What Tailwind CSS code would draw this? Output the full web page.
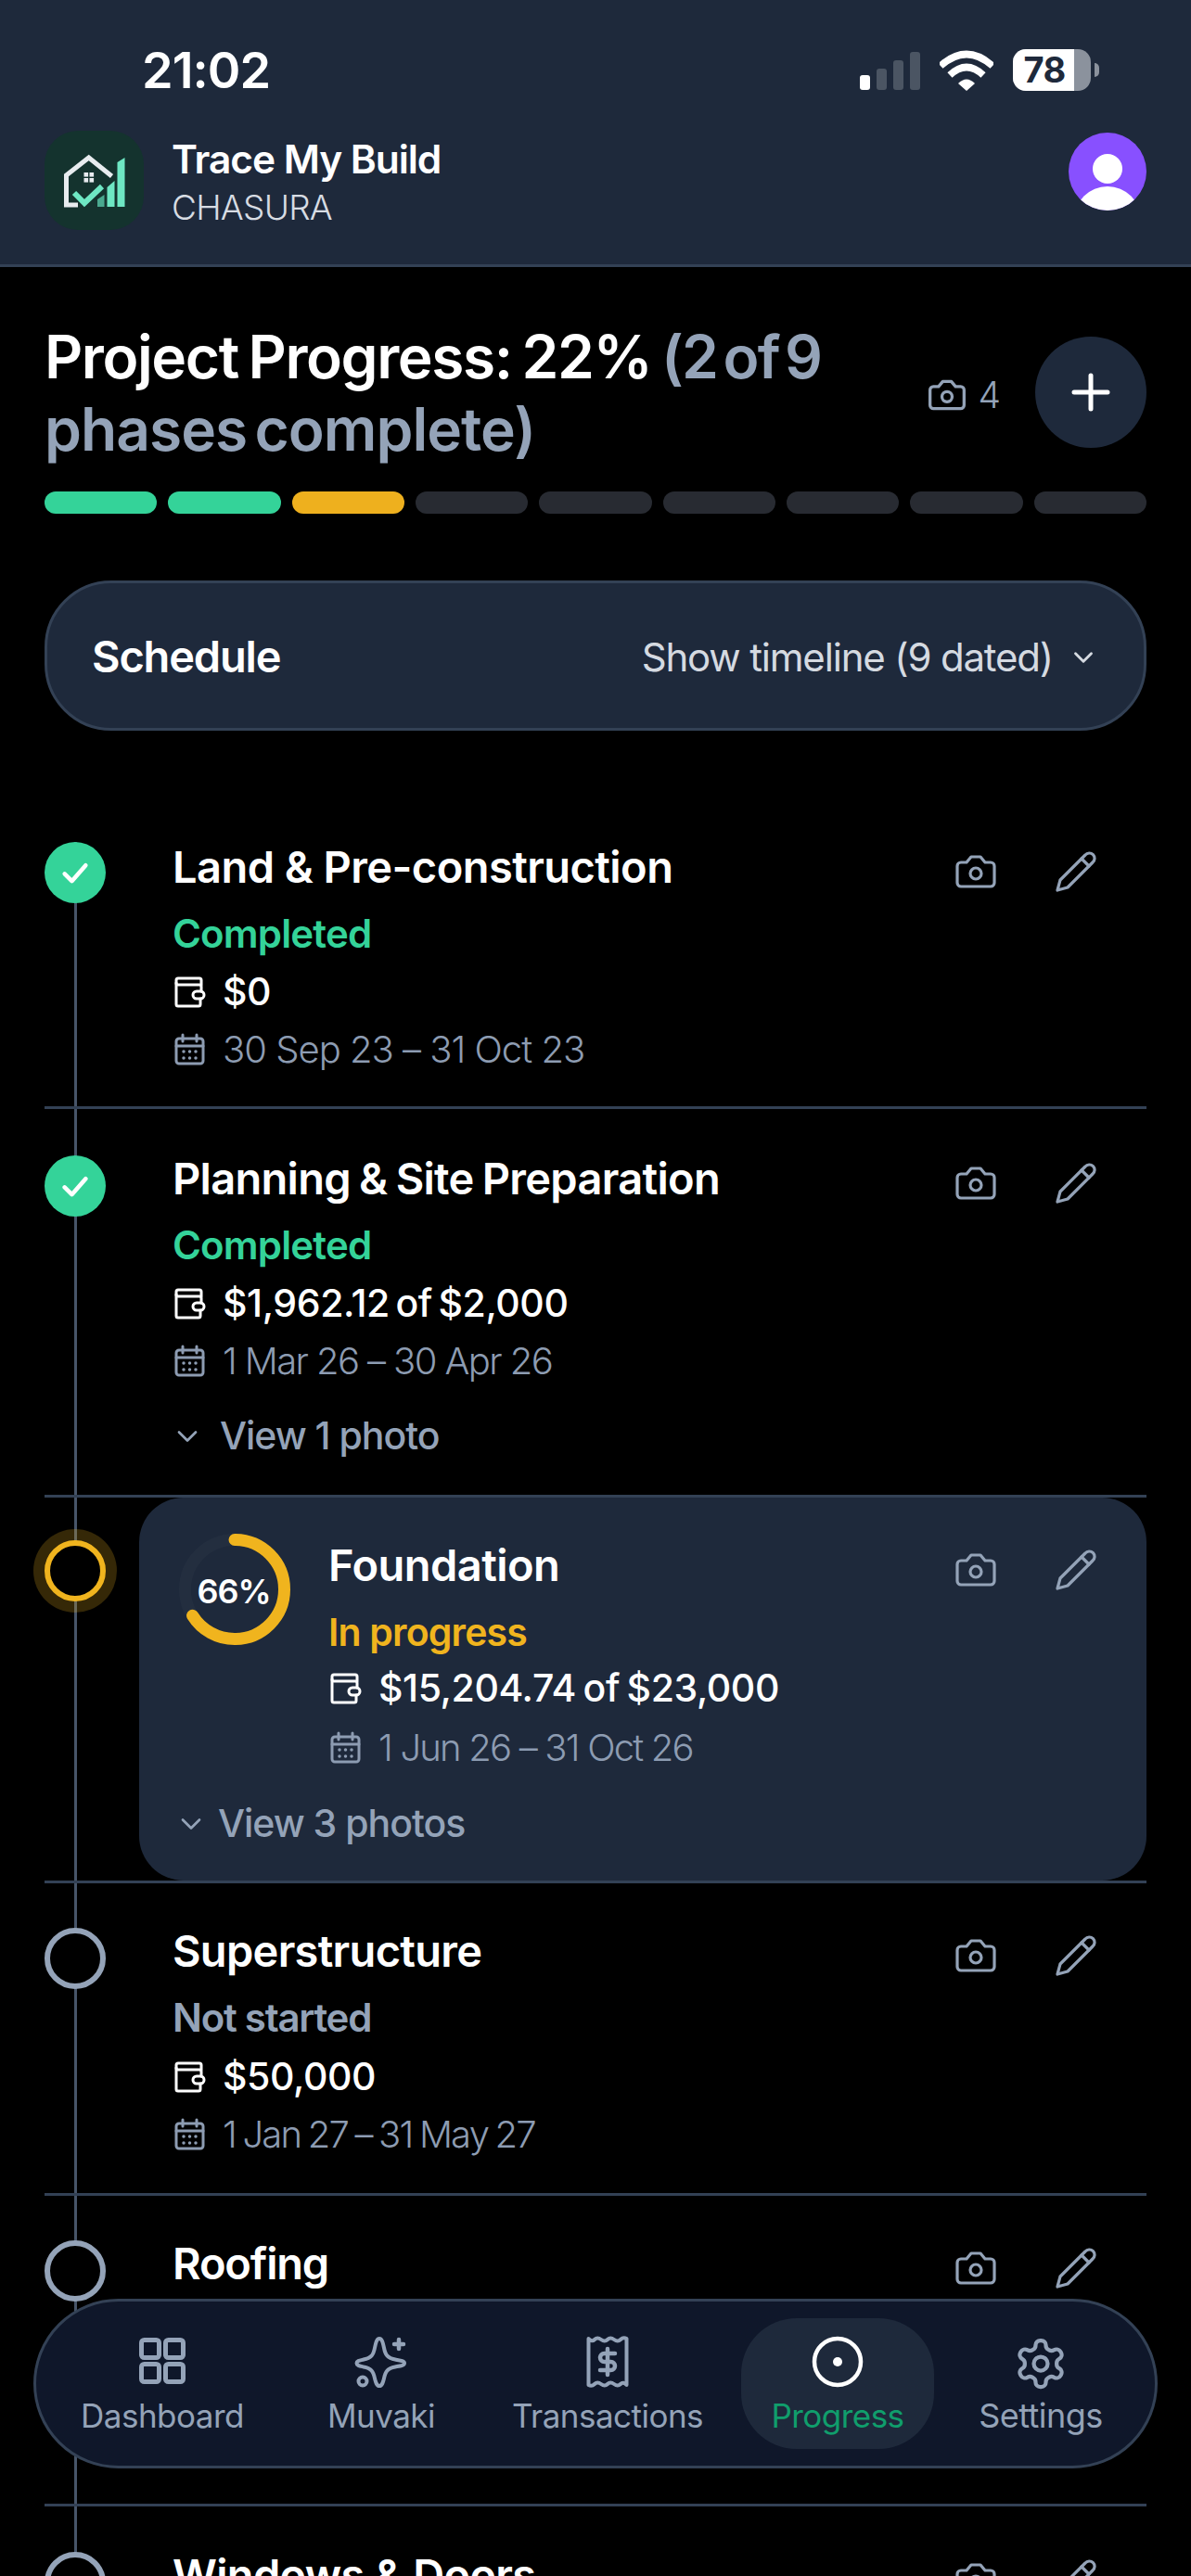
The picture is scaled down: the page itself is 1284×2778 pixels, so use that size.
<!doctype html>
<html><head><meta charset="utf-8"><script src="https://cdn.jsdelivr.net/npm/@tailwindcss/browser@4"></script></head>
<body class="bg-black">
<div class="relative w-[1284px] h-[2778px] overflow-hidden bg-black text-white font-['Inter',sans-serif]">
  <!-- Header -->
  <header class="h-[288px] bg-[#1e293b] border-b-[3px] border-[#334155] px-[48px] pt-[45px]">
    <div class="h-[60px] flex items-center justify-between">
      <div class="ml-[105px] mt-[2px] text-[54px] leading-[60px] font-semibold tracking-[-0.018em]">21:02</div>
      <div class="flex items-end gap-[21px] mr-[51px] h-[46px]">
        <div class="flex items-end gap-[7px] h-[41px] mb-[1px]">
          <div class="w-[11px] h-[16px] rounded-[3px] bg-white"></div>
          <div class="w-[11px] h-[23px] rounded-[3px] bg-[#4b5563]"></div>
          <div class="w-[11px] h-[32px] rounded-[3px] bg-[#4b5563]"></div>
          <div class="w-[11px] h-[41px] rounded-[3px] bg-[#4b5563]"></div>
        </div>
        <svg class="w-[58px] h-[44px]" viewBox="0 0 58 44"><path d="M1 17 Q29 -8 57 17" fill="none" stroke="#fff" stroke-width="7.5"/><path d="M11 27 Q29 10 47 27" fill="none" stroke="#fff" stroke-width="7.5"/><path d="M20 36 Q29 27 38 36 L29 44 Z" fill="#fff"/></svg>
        <div class="flex items-center gap-[4px]">
          <div class="relative w-[84px] h-[45px] rounded-[14px] bg-[#8b929d] overflow-hidden">
            <div class="w-[66px] h-[45px] bg-white text-[#1e293b] text-[38px] leading-[45px] font-bold text-center pl-[2px] tracking-[-0.02em]">78</div>
          </div>
          <div class="w-[5px] h-[15px] rounded-r-[5px] bg-[#8b929d]"></div>
        </div>
      </div>
    </div>
    <div class="mt-[36px] flex items-center justify-between">
      <div class="flex items-center gap-[30px]">
        <div class="w-[107px] h-[107px] rounded-[36px] bg-[#14332e]">
          <svg class="w-[107px] h-[107px]" viewBox="0 0 107 107">
            <path d="M36 80 H23.5 V48 L47.7 29 L72.5 49" fill="none" stroke="#e8ecef" stroke-width="5"/>
            <rect x="42.5" y="45" width="4.6" height="4.6" fill="#e8ecef"/><rect x="48.5" y="45" width="4.6" height="4.6" fill="#e8ecef"/><rect x="42.5" y="51" width="4.6" height="4.6" fill="#e8ecef"/><rect x="48.5" y="51" width="4.6" height="4.6" fill="#e8ecef"/>
            <path d="M32 67 L43 78 L62 60" fill="none" stroke="#6ee7c3" stroke-width="6"/>
            <path d="M57 74 L64.500 69 V82 H57 Z" fill="#4aa98f"/>
            <path d="M67.500 61 L75.500 54 V82 H67.500 Z" fill="#6ee7c3"/>
            <path d="M78.500 34 L86.500 29 V82 H78.500 Z" fill="#6ee7c3"/>
          </svg>
        </div>
        <div class="mt-[3px]">
          <div class="text-[42.5px] leading-[54px] font-semibold tracking-[-0.025em]">Trace My Build</div>
          <div class="text-[37px] leading-[46px] font-light text-[#d7dce3] tracking-[-0.02em] mt-[2px]">CHASURA</div>
        </div>
      </div>
      <div class="relative -mt-[19px] w-[84px] h-[84px] rounded-full bg-[#8850ff] overflow-hidden">
        <svg class="w-[84px] h-[84px]" viewBox="0 0 84 84"><circle cx="42" cy="39" r="16" fill="#fff"/><circle cx="42" cy="94" r="36" fill="#fff"/></svg>
      </div>
    </div>
  </header>

  <main class="px-[48px]">
    <!-- Project progress -->
    <div class="pt-[58px] flex items-center justify-between">
      <h1 class="w-[930px] text-[64px] leading-[78px] font-semibold tracking-[-0.022em] [word-spacing:-4px]">Project Progress: 22% <span class="text-[#94a3b8] tracking-[-0.028em] [word-spacing:-8px]">(2 of 9</span> <span class="text-[#94a3b8] tracking-[-0.015em] [word-spacing:-7px]">phases complete)</span></h1>
      <div class="flex items-center gap-[37px] -mt-[2px]">
        <div class="flex items-center gap-[11px] text-[#94a3b8] text-[39px] font-light mt-[6px]">
          <svg class="w-[44px] h-[44px]" viewBox="0 0 24 24" fill="none" stroke="currentColor" stroke-width="1.800" stroke-linecap="round" stroke-linejoin="round"><path d="M14.500 4h-5L7 7H4a2 2 0 0 0-2 2v9a2 2 0 0 0 2 2h16a2 2 0 0 0 2-2V9a2 2 0 0 0-2-2h-3l-2.500-3z"/><circle cx="12" cy="13" r="3"/></svg>
          <span>4</span>
        </div>
        <button class="w-[120px] h-[120px] rounded-full bg-[#1e293b] flex items-center justify-center">
          <svg class="w-[48px] h-[48px]" viewBox="0 0 48 48" stroke="#fff" stroke-width="5" stroke-linecap="round"><path d="M24 6 V42 M6 24 H42"/></svg>
        </button>
      </div>
    </div>
    <div class="mt-[28px] grid grid-cols-9 gap-[12px]">
      <div class="h-[24px] rounded-full bg-[#34d399]"></div>
      <div class="h-[24px] rounded-full bg-[#34d399]"></div>
      <div class="h-[24px] rounded-full bg-[#eeb01e]"></div>
      <div class="h-[24px] rounded-full bg-[#282b32]"></div>
      <div class="h-[24px] rounded-full bg-[#282b32]"></div>
      <div class="h-[24px] rounded-full bg-[#282b32]"></div>
      <div class="h-[24px] rounded-full bg-[#282b32]"></div>
      <div class="h-[24px] rounded-full bg-[#282b32]"></div>
      <div class="h-[24px] rounded-full bg-[#282b32]"></div>
    </div>

    <!-- Schedule -->
    <div class="mt-[72px] h-[162px] rounded-[72px] bg-[#1e293b] border-[3px] border-[#334155] px-[48px] flex items-center justify-between">
      <div class="mt-[3px] text-[47px] font-semibold tracking-[-0.025em]">Schedule</div>
      <div class="mt-[3px] flex items-center gap-[16px] text-[#d5dae1] text-[42px] tracking-[-0.028em]">
        <span>Show timeline (9 dated)</span>
        <svg class="w-[34px] h-[34px]" viewBox="0 0 24 24" fill="none" stroke="currentColor" stroke-width="2" stroke-linecap="round" stroke-linejoin="round"><path d="m6 9 6 6 6-6"/></svg>
      </div>
    </div>

    <!-- Timeline -->
    <div class="relative mt-[70px]">
      <div class="absolute left-[32px] top-[50px] bottom-0 w-[3px] bg-[#475569]"></div>

      <!-- Row 1 -->
      <section class="relative flex border-b-[3px] border-[#334155] h-[338px]">
        <div class="w-[138px] shrink-0 pt-[50px]">
          <div class="w-[66px] h-[66px] rounded-full bg-[#34d399] flex items-center justify-center">
            <svg class="w-[34px] h-[34px]" viewBox="0 0 24 24" fill="none" stroke="#fff" stroke-width="3.200" stroke-linecap="round" stroke-linejoin="round"><path d="M4 13 L9.500 18.500 L20 6.500"/></svg>
          </div>
        </div>
        <div class="flex-1 pt-[47px]">
          <div class="text-[47px] leading-[60px] font-semibold tracking-[-0.012em]">Land &amp; Pre-construction</div>
          <div class="mt-[12px] text-[42px] leading-[60px] font-semibold tracking-[-0.02em] text-[#34d399]">Completed</div>
          <div class="mt-[2px] flex items-center h-[62px]">
            <svg class="w-[36px] h-[36px] ml-[1px] mr-[17px]" viewBox="0 0 36 36" fill="none" stroke="#fff" stroke-width="3" stroke-linejoin="round" stroke-linecap="round"><path d="M30 10 V5 a2 2 0 0 0 -2 -2 H5 a2 2 0 0 0 -2 2 V31 a2 2 0 0 0 2 2 H27 a2 2 0 0 0 2 -2 V25"/><path d="M3 8 a2 2 0 0 0 2 2 H28 a2 2 0 0 1 2 2 V17"/><rect x="21" y="17" width="12" height="8" rx="4"/></svg>
            <span class="text-[41px] font-medium tracking-[-0.01em]">$0</span>
          </div>
          <div class="flex items-center h-[62px] text-[#8d9cb2]">
            <svg class="w-[36px] h-[36px] ml-[1px] mr-[17px]" viewBox="0 0 36 36" fill="none" stroke="currentColor" stroke-width="3" stroke-linecap="round"><rect x="3" y="6" width="29" height="27" rx="3"/><path d="M10 2 V9 M25 2 V9 M3 14 H32"/><path d="M11 20 h.01 M17.500 20 h.01 M24 20 h.01 M11 27 h.01 M17.500 27 h.01 M24 27 h.01" stroke-width="3.500"/></svg>
            <span class="text-[40px] font-light tracking-[-0.025em]">30 Sep 23 – 31 Oct 23</span>
          </div>
        </div>
        <div class="flex gap-[60px] pr-[52px] pt-[58px] text-[#94a3b8]">
          <svg class="w-[48px] h-[48px]" viewBox="0 0 24 24" fill="none" stroke="currentColor" stroke-width="1.600" stroke-linecap="round" stroke-linejoin="round"><path d="M14.500 4h-5L7 7H4a2 2 0 0 0-2 2v9a2 2 0 0 0 2 2h16a2 2 0 0 0 2-2V9a2 2 0 0 0-2-2h-3l-2.500-3z"/><circle cx="12" cy="13" r="3"/></svg>
          <svg class="w-[48px] h-[48px]" viewBox="0 0 24 24" fill="none" stroke="currentColor" stroke-width="1.600" stroke-linecap="round" stroke-linejoin="round"><path d="M17 3a2.850 2.830 0 1 1 4 4L7.500 20.500 2 22l1.500-5.500Z"/><path d="m15 5 4 4"/></svg>
        </div>
      </section>

      <!-- Row 2 -->
      <section class="relative flex border-b-[3px] border-[#334155] h-[419px]">
        <div class="w-[138px] shrink-0 pt-[50px]">
          <div class="w-[66px] h-[66px] rounded-full bg-[#34d399] flex items-center justify-center">
            <svg class="w-[34px] h-[34px]" viewBox="0 0 24 24" fill="none" stroke="#fff" stroke-width="3.200" stroke-linecap="round" stroke-linejoin="round"><path d="M4 13 L9.500 18.500 L20 6.500"/></svg>
          </div>
        </div>
        <div class="flex-1 pt-[45px]">
          <div class="text-[47px] leading-[60px] font-semibold tracking-[-0.015em] [word-spacing:-2px]">Planning &amp; Site Preparation</div>
          <div class="mt-[12px] text-[42px] leading-[60px] font-semibold tracking-[-0.02em] text-[#34d399]">Completed</div>
          <div class="mt-[2px] flex items-center h-[62px]">
            <svg class="w-[36px] h-[36px] ml-[1px] mr-[17px]" viewBox="0 0 36 36" fill="none" stroke="#fff" stroke-width="3" stroke-linejoin="round" stroke-linecap="round"><path d="M30 10 V5 a2 2 0 0 0 -2 -2 H5 a2 2 0 0 0 -2 2 V31 a2 2 0 0 0 2 2 H27 a2 2 0 0 0 2 -2 V25"/><path d="M3 8 a2 2 0 0 0 2 2 H28 a2 2 0 0 1 2 2 V17"/><rect x="21" y="17" width="12" height="8" rx="4"/></svg>
            <span class="text-[41px] font-medium tracking-[-0.01em] [word-spacing:-4px]">$1,962.12 of $2,000</span>
          </div>
          <div class="flex items-center h-[62px] text-[#8d9cb2]">
            <svg class="w-[36px] h-[36px] ml-[1px] mr-[17px]" viewBox="0 0 36 36" fill="none" stroke="currentColor" stroke-width="3" stroke-linecap="round"><rect x="3" y="6" width="29" height="27" rx="3"/><path d="M10 2 V9 M25 2 V9 M3 14 H32"/><path d="M11 20 h.01 M17.500 20 h.01 M24 20 h.01 M11 27 h.01 M17.500 27 h.01 M24 27 h.01" stroke-width="3.500"/></svg>
            <span class="text-[40px] font-light tracking-[-0.04em]">1 Mar 26 – 30 Apr 26</span>
          </div>
          <div class="mt-[20px] flex items-center h-[60px] text-[#94a3b8]">
            <svg class="w-[36px] h-[36px] -ml-[2px] mr-[17px]" viewBox="0 0 24 24" fill="none" stroke="currentColor" stroke-width="1.800" stroke-linecap="round" stroke-linejoin="round"><path d="m6 9 6 6 6-6"/></svg>
            <span class="text-[41px] font-medium tracking-[-0.025em]">View 1 photo</span>
          </div>
        </div>
        <div class="flex gap-[60px] pr-[52px] pt-[56px] text-[#94a3b8]">
          <svg class="w-[48px] h-[48px]" viewBox="0 0 24 24" fill="none" stroke="currentColor" stroke-width="1.600" stroke-linecap="round" stroke-linejoin="round"><path d="M14.500 4h-5L7 7H4a2 2 0 0 0-2 2v9a2 2 0 0 0 2 2h16a2 2 0 0 0 2-2V9a2 2 0 0 0-2-2h-3l-2.500-3z"/><circle cx="12" cy="13" r="3"/></svg>
          <svg class="w-[48px] h-[48px]" viewBox="0 0 24 24" fill="none" stroke="currentColor" stroke-width="1.600" stroke-linecap="round" stroke-linejoin="round"><path d="M17 3a2.850 2.830 0 1 1 4 4L7.500 20.500 2 22l1.500-5.500Z"/><path d="m15 5 4 4"/></svg>
        </div>
      </section>

      <!-- Row 3 (current) -->
      <section class="relative flex border-b-[3px] border-[#334155] h-[416px]">
        <div class="w-[102px] shrink-0 pt-[46px]">
          <div class="w-[66px] h-[66px] rounded-full bg-black border-[6px] border-[#f0b41e] shadow-[0_0_0_12px_rgba(240,180,30,0.22)]"></div>
        </div>
        <div class="flex-1 h-[413px] rounded-[48px] bg-[#1e293b] pl-[43px]">
          <div class="flex">
            <div class="relative w-[120px] h-[120px] mt-[39px] mr-[41px] shrink-0">
              <svg class="w-[120px] h-[120px] -rotate-90" viewBox="0 0 120 120" fill="none" stroke-width="13"><circle cx="60" cy="60" r="53.500" stroke="#ffffff" stroke-opacity="0.025"/><circle cx="60" cy="60" r="53.500" stroke="#f0b41e" stroke-linecap="round" stroke-dasharray="222 336"/></svg>
              <div class="absolute inset-0 pt-[3px] -ml-[2px] flex items-center justify-center text-[36px] font-semibold tracking-[-0.03em]">66%</div>
            </div>
            <div class="flex-1 pt-[43px]">
              <div class="text-[47px] leading-[60px] font-semibold tracking-[-0.012em]">Foundation</div>
              <div class="mt-[12px] text-[41px] leading-[60px] font-semibold tracking-[-0.02em] text-[#f0b41e]">In progress</div>
              <div class="flex items-center h-[62px]">
                <svg class="w-[36px] h-[36px] ml-[1px] mr-[17px]" viewBox="0 0 36 36" fill="none" stroke="#fff" stroke-width="3" stroke-linejoin="round" stroke-linecap="round"><path d="M30 10 V5 a2 2 0 0 0 -2 -2 H5 a2 2 0 0 0 -2 2 V31 a2 2 0 0 0 2 2 H27 a2 2 0 0 0 2 -2 V25"/><path d="M3 8 a2 2 0 0 0 2 2 H28 a2 2 0 0 1 2 2 V17"/><rect x="21" y="17" width="12" height="8" rx="4"/></svg>
                <span class="text-[41px] font-medium tracking-[-0.01em] [word-spacing:-3px]">$15,204.74 of $23,000</span>
              </div>
              <div class="mt-[2px] flex items-center h-[62px] text-[#8d9cb2]">
                <svg class="w-[36px] h-[36px] ml-[1px] mr-[17px]" viewBox="0 0 36 36" fill="none" stroke="currentColor" stroke-width="3" stroke-linecap="round"><rect x="3" y="6" width="29" height="27" rx="3"/><path d="M10 2 V9 M25 2 V9 M3 14 H32"/><path d="M11 20 h.01 M17.500 20 h.01 M24 20 h.01 M11 27 h.01 M17.500 27 h.01 M24 27 h.01" stroke-width="3.500"/></svg>
                <span class="text-[40px] font-light tracking-[-0.045em]">1 Jun 26 – 31 Oct 26</span>
              </div>
            </div>
            <div class="flex gap-[60px] pr-[52px] pt-[54px] text-[#94a3b8]">
              <svg class="w-[48px] h-[48px]" viewBox="0 0 24 24" fill="none" stroke="currentColor" stroke-width="1.600" stroke-linecap="round" stroke-linejoin="round"><path d="M14.500 4h-5L7 7H4a2 2 0 0 0-2 2v9a2 2 0 0 0 2 2h16a2 2 0 0 0 2-2V9a2 2 0 0 0-2-2h-3l-2.500-3z"/><circle cx="12" cy="13" r="3"/></svg>
              <svg class="w-[48px] h-[48px]" viewBox="0 0 24 24" fill="none" stroke="currentColor" stroke-width="1.600" stroke-linecap="round" stroke-linejoin="round"><path d="M17 3a2.850 2.830 0 1 1 4 4L7.500 20.500 2 22l1.500-5.500Z"/><path d="m15 5 4 4"/></svg>
            </div>
          </div>
          <div class="mt-[21px] flex items-center h-[60px] text-[#94a3b8]">
            <svg class="w-[36px] h-[36px] -ml-[5px] mr-[11px]" viewBox="0 0 24 24" fill="none" stroke="currentColor" stroke-width="1.800" stroke-linecap="round" stroke-linejoin="round"><path d="m6 9 6 6 6-6"/></svg>
            <span class="text-[41px] font-medium tracking-[-0.025em]">View 3 photos</span>
          </div>
        </div>
      </section>

      <!-- Row 4 -->
      <section class="relative flex border-b-[3px] border-[#334155] h-[337px]">
        <div class="w-[138px] shrink-0 pt-[48px]">
          <div class="w-[66px] h-[66px] rounded-full bg-black border-[6px] border-[#94a3b8]"></div>
        </div>
        <div class="flex-1 pt-[43px]">
          <div class="text-[47px] leading-[60px] font-semibold tracking-[-0.015em]">Superstructure</div>
          <div class="mt-[12px] text-[42px] leading-[60px] font-semibold tracking-[-0.03em] text-[#94a3b8]">Not started</div>
          <div class="mt-[3px] flex items-center h-[62px]">
            <svg class="w-[36px] h-[36px] ml-[1px] mr-[17px]" viewBox="0 0 36 36" fill="none" stroke="#fff" stroke-width="3" stroke-linejoin="round" stroke-linecap="round"><path d="M30 10 V5 a2 2 0 0 0 -2 -2 H5 a2 2 0 0 0 -2 2 V31 a2 2 0 0 0 2 2 H27 a2 2 0 0 0 2 -2 V25"/><path d="M3 8 a2 2 0 0 0 2 2 H28 a2 2 0 0 1 2 2 V17"/><rect x="21" y="17" width="12" height="8" rx="4"/></svg>
            <span class="text-[41px] font-medium tracking-[-0.01em]">$50,000</span>
          </div>
          <div class="flex items-center h-[62px] text-[#8d9cb2]">
            <svg class="w-[36px] h-[36px] ml-[1px] mr-[17px]" viewBox="0 0 36 36" fill="none" stroke="currentColor" stroke-width="3" stroke-linecap="round"><rect x="3" y="6" width="29" height="27" rx="3"/><path d="M10 2 V9 M25 2 V9 M3 14 H32"/><path d="M11 20 h.01 M17.500 20 h.01 M24 20 h.01 M11 27 h.01 M17.500 27 h.01 M24 27 h.01" stroke-width="3.500"/></svg>
            <span class="text-[40px] font-light tracking-[-0.045em] [word-spacing:-2px]">1 Jan 27 – 31 May 27</span>
          </div>
        </div>
        <div class="flex gap-[60px] pr-[52px] pt-[54px] text-[#94a3b8]">
          <svg class="w-[48px] h-[48px]" viewBox="0 0 24 24" fill="none" stroke="currentColor" stroke-width="1.600" stroke-linecap="round" stroke-linejoin="round"><path d="M14.500 4h-5L7 7H4a2 2 0 0 0-2 2v9a2 2 0 0 0 2 2h16a2 2 0 0 0 2-2V9a2 2 0 0 0-2-2h-3l-2.500-3z"/><circle cx="12" cy="13" r="3"/></svg>
          <svg class="w-[48px] h-[48px]" viewBox="0 0 24 24" fill="none" stroke="currentColor" stroke-width="1.600" stroke-linecap="round" stroke-linejoin="round"><path d="M17 3a2.850 2.830 0 1 1 4 4L7.500 20.500 2 22l1.500-5.500Z"/><path d="m15 5 4 4"/></svg>
        </div>
      </section>

      <!-- Row 5 -->
      <section class="relative flex border-b-[3px] border-[#334155] h-[335px]">
        <div class="w-[138px] shrink-0 pt-[48px]">
          <div class="w-[66px] h-[66px] rounded-full bg-black border-[6px] border-[#94a3b8]"></div>
        </div>
        <div class="flex-1 pt-[43px]">
          <div class="text-[47px] leading-[60px] font-semibold tracking-[-0.025em]">Roofing</div>
        </div>
        <div class="flex gap-[60px] pr-[52px] pt-[54px] text-[#94a3b8]">
          <svg class="w-[48px] h-[48px]" viewBox="0 0 24 24" fill="none" stroke="currentColor" stroke-width="1.600" stroke-linecap="round" stroke-linejoin="round"><path d="M14.500 4h-5L7 7H4a2 2 0 0 0-2 2v9a2 2 0 0 0 2 2h16a2 2 0 0 0 2-2V9a2 2 0 0 0-2-2h-3l-2.500-3z"/><circle cx="12" cy="13" r="3"/></svg>
          <svg class="w-[48px] h-[48px]" viewBox="0 0 24 24" fill="none" stroke="currentColor" stroke-width="1.600" stroke-linecap="round" stroke-linejoin="round"><path d="M17 3a2.850 2.830 0 1 1 4 4L7.500 20.500 2 22l1.500-5.500Z"/><path d="m15 5 4 4"/></svg>
        </div>
      </section>

      <!-- Row 6 -->
      <section class="relative flex h-[336px]">
        <div class="w-[138px] shrink-0 pt-[49px]">
          <div class="w-[66px] h-[66px] rounded-full bg-black border-[6px] border-[#94a3b8]"></div>
        </div>
        <div class="flex-1 pt-[44px]">
          <div class="text-[47px] leading-[60px] font-semibold tracking-[-0.015em]">Windows &amp; Doors</div>
        </div>
        <div class="flex gap-[60px] pr-[52px] pt-[55px] text-[#94a3b8]">
          <svg class="w-[48px] h-[48px]" viewBox="0 0 24 24" fill="none" stroke="currentColor" stroke-width="1.600" stroke-linecap="round" stroke-linejoin="round"><path d="M14.500 4h-5L7 7H4a2 2 0 0 0-2 2v9a2 2 0 0 0 2 2h16a2 2 0 0 0 2-2V9a2 2 0 0 0-2-2h-3l-2.500-3z"/><circle cx="12" cy="13" r="3"/></svg>
          <svg class="w-[48px] h-[48px]" viewBox="0 0 24 24" fill="none" stroke="currentColor" stroke-width="1.600" stroke-linecap="round" stroke-linejoin="round"><path d="M17 3a2.850 2.830 0 1 1 4 4L7.500 20.500 2 22l1.500-5.500Z"/><path d="m15 5 4 4"/></svg>
        </div>
      </section>
    </div>
  </main>

  <!-- Bottom nav -->
  <nav class="absolute left-[36px] top-[2479px] w-[1212px] h-[183px] rounded-full bg-[#0f172a] border-[3px] border-[#334155] text-[#94a3b8] text-[35px] tracking-[-0.015em]">
    <div class="relative w-full h-full">
      <div class="absolute left-[46px] top-[39px] w-[180px] flex flex-col items-center">
        <svg class="w-[50px] h-[50px] mb-[12px]" viewBox="0 0 50 50" fill="none" stroke="currentColor" stroke-width="5"><rect x="2.500" y="2.500" width="19" height="19" rx="3"/><rect x="28.500" y="2.500" width="19" height="19" rx="3"/><rect x="2.500" y="28.500" width="19" height="19" rx="3"/><rect x="28.500" y="28.500" width="19" height="19" rx="3"/></svg>
        <span class="leading-[44px]">Dashboard</span>
      </div>
      <div class="absolute left-[282px] top-[37px] w-[180px] flex flex-col items-center">
        <svg class="w-[58px] h-[56px] mb-[8px]" viewBox="0 0 58 56" fill="none" stroke="currentColor" stroke-width="4" stroke-linecap="round" stroke-linejoin="round"><path d="M27 3 C30 3 31 8 32 13 C33.500 21 36 24 44 25.500 C49 26.500 54 27 54 29.500 C54 32 49 32.500 44 33.500 C36 35 33.500 38 32 46 C31 50 30 54 27 54 C24 54 23 50 22 46 C20.500 38 18 35 10 33.500 C6 32.500 2.500 32 2.500 29.500 C2.500 27 6 26.500 10 25.500 C18 24 20.500 21 22 13 C23 8 24 3 27 3 Z"/><path d="M48 4 V14 M43 9 H53" stroke-width="4.500"/><circle cx="9" cy="49" r="4.500"/></svg>
        <span class="leading-[44px]">Muvaki</span>
      </div>
      <div class="absolute left-[516px] top-[37px] w-[200px] flex flex-col items-center">
        <svg class="w-[46px] h-[56px] mb-[8px]" viewBox="0 0 46 56" fill="none" stroke="currentColor" stroke-width="4" stroke-linecap="round" stroke-linejoin="round"><path d="M2.500 3 Q6 7 9 4 T16 4 T23 4 T30 4 T37 4 T43.500 3 V53 Q40 49 37 52 T30 52 T23 52 T16 52 T9 52 T2.500 53 Z"/><path d="M31 19 H19.500 a4.500 4.500 0 0 0 0 9 H26.500 a4.500 4.500 0 0 1 0 9 H15 M23 14 V42" stroke-width="4.500"/></svg>
        <span class="leading-[44px]">Transactions</span>
      </div>
      <div class="absolute left-[760px] top-[18px] w-[208px] h-[141px] rounded-[60px] bg-[#1e293b] flex flex-col items-center pt-[19px] text-[#109e6c]">
        <svg class="w-[56px] h-[56px] mb-[8px]" viewBox="0 0 56 56" fill="none"><circle cx="28" cy="28" r="25" stroke="#fff" stroke-width="4.500"/><circle cx="28" cy="28" r="5" fill="#fff"/></svg>
        <span class="leading-[44px]">Progress</span>
      </div>
      <div class="absolute left-[993px] top-[37px] w-[180px] flex flex-col items-center">
        <svg class="w-[60px] h-[60px] mb-[4px]" viewBox="0 0 24 24" fill="none" stroke="currentColor" stroke-width="1.700" stroke-linecap="round" stroke-linejoin="round"><path d="M12.220 2h-.44a2 2 0 0 0-2 2v.18a2 2 0 0 1-1 1.730l-.43.25a2 2 0 0 1-2 0l-.15-.08a2 2 0 0 0-2.730.73l-.22.38a2 2 0 0 0 .73 2.730l.15.1a2 2 0 0 1 1 1.720v.51a2 2 0 0 1-1 1.740l-.15.09a2 2 0 0 0-.73 2.730l.22.38a2 2 0 0 0 2.730.73l.15-.08a2 2 0 0 1 2 0l.43.25a2 2 0 0 1 1 1.730V20a2 2 0 0 0 2 2h.44a2 2 0 0 0 2-2v-.18a2 2 0 0 1 1-1.730l.43-.25a2 2 0 0 1 2 0l.15.08a2 2 0 0 0 2.730-.73l.22-.39a2 2 0 0 0-.73-2.730l-.15-.08a2 2 0 0 1-1-1.740v-.5a2 2 0 0 1 1-1.740l.15-.09a2 2 0 0 0 .73-2.730l-.22-.38a2 2 0 0 0-2.730-.73l-.15.08a2 2 0 0 1-2 0l-.43-.25a2 2 0 0 1-1-1.730V4a2 2 0 0 0-2-2z"/><circle cx="12" cy="12" r="3"/></svg>
        <span class="leading-[44px] text-[36px]">Settings</span>
      </div>
    </div>
  </nav>
</div>
</body></html>
